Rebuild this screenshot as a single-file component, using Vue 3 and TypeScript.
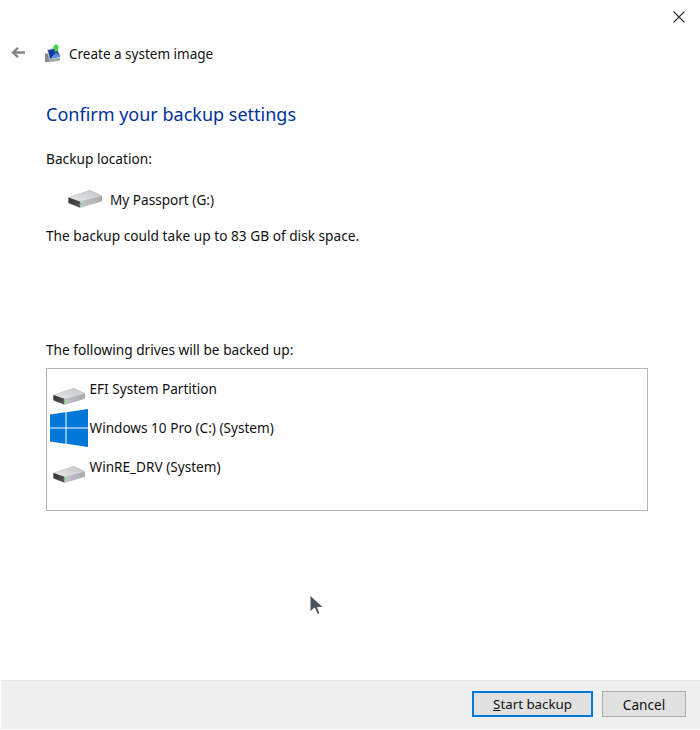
<script setup lang="ts">
const drives = [
  { name: 'EFI System Partition', win: false },
  { name: 'Windows 10 Pro (C:) (System)', win: true },
  { name: 'WinRE_DRV (System)', win: false },
]
</script>

<template>
  <div class="window">
    <svg width="0" height="0" class="defs">
      <defs>
        <linearGradient id="diskTop" x1="0" y1="1" x2="1" y2="0">
          <stop offset="0" stop-color="#e6e7e8" />
          <stop offset="1" stop-color="#c4c6c8" />
        </linearGradient>
        <linearGradient id="diskSide" x1="0" y1="0" x2="1" y2="0">
          <stop offset="0" stop-color="#d2d3d5" />
          <stop offset="1" stop-color="#a9abad" />
        </linearGradient>
        <linearGradient id="diskFront" x1="0" y1="0" x2="1" y2="1">
          <stop offset="0" stop-color="#2e2e2e" />
          <stop offset="1" stop-color="#5a5a5a" />
        </linearGradient>
      </defs>
    </svg>
    <div class="topbar">
      <svg width="12" height="12" viewBox="0 0 12 12"><path d="M.5.500 11.500 11.500M11.500.500.500 11.500" stroke="#333" stroke-width="1.100" fill="none" /></svg>
    </div>
    <div class="nav">
      <svg class="back" width="14" height="11" viewBox="0 0 14 11"><path d="M14 5.500H2.500M7 .800 2 5.500 7 10.200" stroke="#858585" stroke-width="2.300" fill="none" /></svg>
      <svg class="app" width="17" height="19" viewBox="0 0 17 19">
        <path d="M1 9.500h5V18H1z" fill="#85888d" />
        <path d="M3 5.500 13 3 17 13 5 16z" fill="#c3c8d0" />
        <path d="M4 6.300 12.500 4.300 15.700 12.500 6 14.800z" fill="#163a9e" />
        <path d="M7 14 12 8.500 15.700 12.500 6 14.800z" fill="#5b93e6" />
        <path d="M5 15.500 16 13.500V16.500L5 18.500z" fill="#a5a8ad" />
        <path d="M12 0 15.500 3.600H13.700V7.500H10.300V3.600H8.500z" fill="#3cd63c" />
      </svg>
      <span class="nav-title">Create a system image</span>
    </div>

    <main class="content">
      <h1>Confirm your backup settings</h1>
      <p class="label">Backup location:</p>
      <div class="location">
        <svg width="34" height="18" viewBox="0 0 34 18">
          <path d="M.5 7.500 22 .500 33.500 6V11L12 17.500.5 13z" fill="url(#diskSide)" stroke="url(#diskSide)" stroke-linejoin="round" />
          <path d="M.5 7.500 22 .500 33.500 6 12 11.500z" fill="url(#diskTop)" />
          <path d="M.5 7.500 12 11.500V17.500L.5 13z" fill="url(#diskFront)" />
          <circle cx="12.300" cy="14" r="1" fill="#4ddc4d" />
        </svg>
        <span>My Passport (G:)</span>
      </div>
      <p class="size">The backup could take up to 83 GB of disk space.</p>
      <p class="label drives-label">The following drives will be backed up:</p>
      <div class="list">
        <div v-for="d in drives" :key="d.name" class="row">
          <div class="icon">
            <svg v-if="d.win" width="38" height="38" viewBox="0 0 38 38">
              <path d="M0 5.500 15.500 3.300V18.500H0zM16.500 3.200 38 0V18.500H16.500zM0 19.500H15.500V34.700L0 32.500zM16.500 19.500H38V38L16.500 34.800z" fill="#0078d7" />
            </svg>
            <svg v-else class="drive" width="34" height="17" viewBox="0 0 34 18">
              <path d="M.5 7.500 22 .500 33.500 6V11L12 17.500.5 13z" fill="url(#diskSide)" stroke="url(#diskSide)" stroke-linejoin="round" />
              <path d="M.5 7.500 22 .500 33.500 6 12 11.500z" fill="url(#diskTop)" />
              <path d="M.5 7.500 12 11.500V17.500L.5 13z" fill="url(#diskFront)" />
              <circle cx="12.300" cy="14" r="1" fill="#4ddc4d" />
            </svg>
          </div>
          <span class="drive-name">{{ d.name }}</span>
        </div>
      </div>
    </main>

    <footer class="footer">
      <button class="btn primary"><span class="u">S</span>tart backup</button>
      <button class="btn">Cancel</button>
    </footer>

    <svg class="cursor" width="16" height="22" viewBox="0 0 16 22">
      <path d="M1 1V18L5.500 14 8.500 20.500 11 19.500 8.500 13.500H14.500z" fill="#4a545a" stroke="#fff" stroke-width="1" />
    </svg>
  </div>
</template>

<style>
html, body { margin: 0; background: #fff; }
</style>

<style scoped>
.window {
  position: relative;
  width: 700px;
  height: 730px;
  display: flex;
  flex-direction: column;
  background: #fff;
  overflow: hidden;
  font-family: "Noto Sans", "Open Sans", sans-serif;
  font-size: 13.600px;
  color: #111;
}
.defs { position: absolute; }
.topbar {
  height: 36px;
  display: flex;
  justify-content: flex-end;
  align-items: flex-start;
  padding: 11px 15px 0 0;
  box-sizing: border-box;
}
.nav {
  height: 34px;
  display: flex;
  align-items: center;
  padding-left: 11px;
}
.back { margin-right: 19px; margin-top: -1px; }
.app { margin-right: 8px; }
.nav-title { line-height: 20px; margin-top: 2px; font-size: 13.500px; }
.content {
  flex: 1;
  padding: 0 52px 0 46px;
}
h1 {
  margin: 31px 0 0;
  font-size: 18px;
  font-weight: 400;
  line-height: 26px;
  color: #003399;
}
p { margin: 0; line-height: 20px; font-size: 13.700px; }
.label { margin-top: 22px; }
.location {
  display: flex;
  align-items: center;
  margin: 20px 0 0 22px;
  height: 20px;
  gap: 8px;
}
.size { margin-top: 17px; }
.drives-label { margin-top: 94px; }
.list {
  margin-top: 8px;
  height: 143px;
  box-sizing: border-box;
  border: 1px solid #b4b4b4;
  padding: 1px 3px;
}
.row {
  display: flex;
  height: 38.800px;
  line-height: 38px;
}
.icon {
  width: 39.500px;
  height: 38px;
  display: flex;
  align-items: flex-end;
  flex: none;
}
.drive { margin: 0 0 3px 2px; }
.footer {
  height: 49px;
  margin: 0 0 1px 1px;
  padding: 0 14px 2px 0;
  background: #f0f0f0;
  border-top: 1px solid #e6e6e6;
  box-sizing: border-box;
  display: flex;
  justify-content: flex-end;
  align-items: center;
  gap: 9px;
}
.btn {
  height: 26px;
  width: 84px;
  padding: 0;
  border: 1px solid #adadad;
  background: #e1e1e1;
  font: inherit;
  color: #111;
}
.primary {
  width: 121px;
  border: 2px solid #0078d7;
  font-size: 13.300px;
}
.u { text-decoration: underline; }
.cursor {
  position: absolute;
  left: 309px;
  top: 594px;
}
</style>
